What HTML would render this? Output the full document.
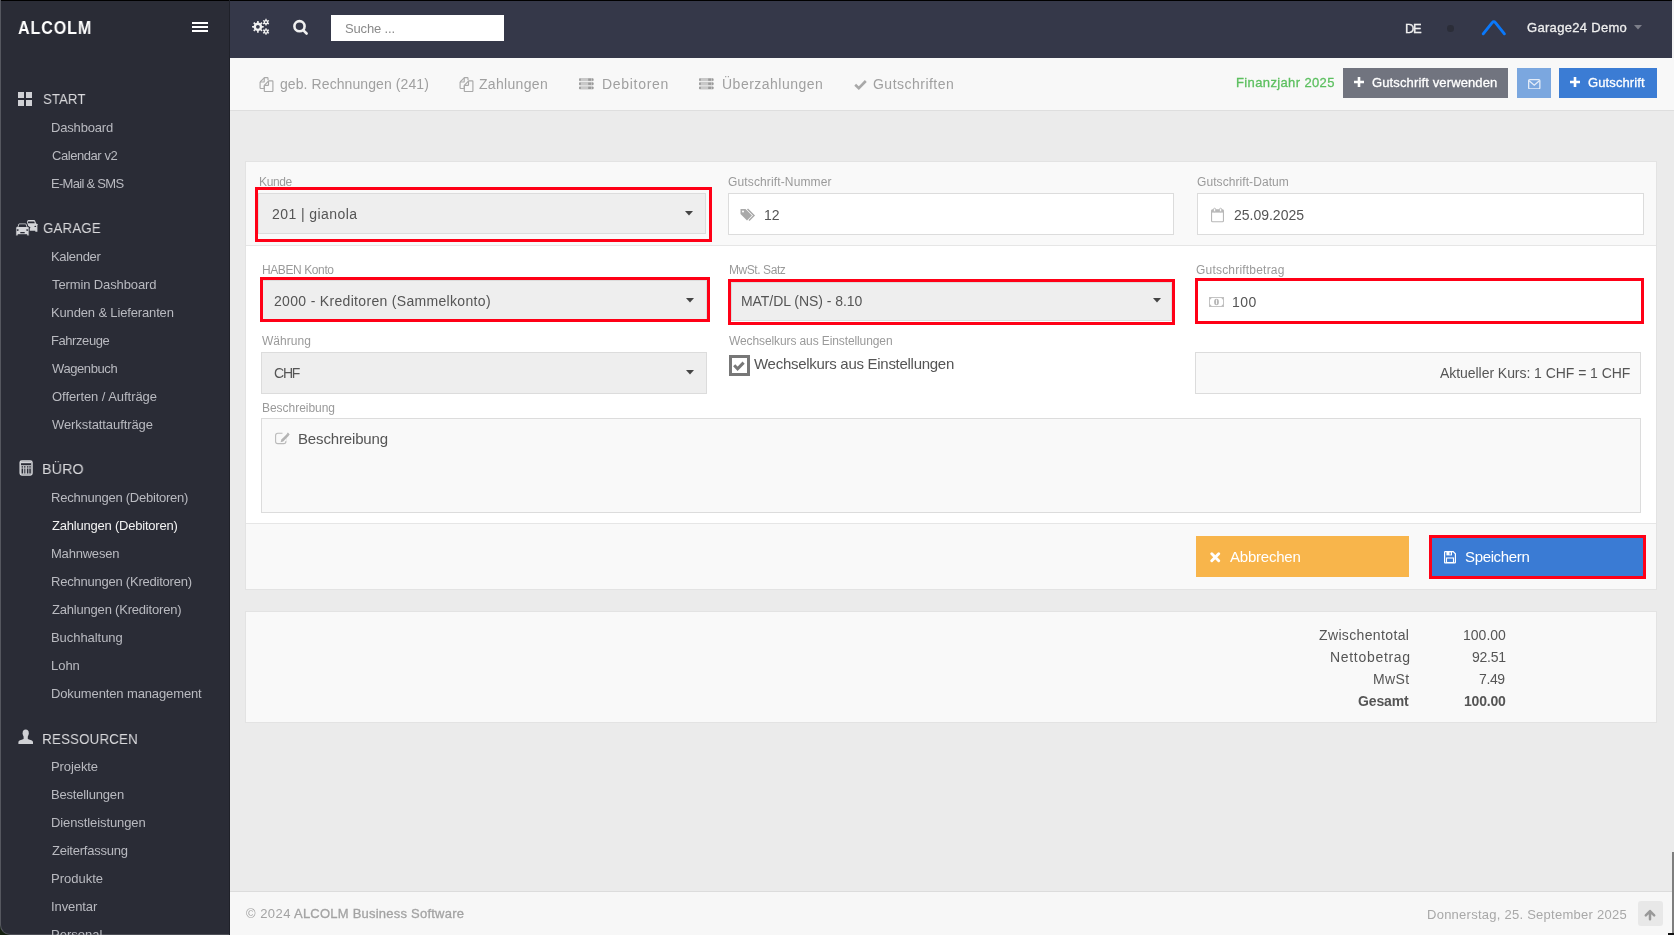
<!DOCTYPE html>
<html><head><meta charset="utf-8"><title>ALCOLM</title>
<style>
html,body{margin:0;padding:0;width:1674px;height:935px;overflow:hidden;background:#ebebeb;font-family:"Liberation Sans", sans-serif;}
.t{position:absolute;white-space:nowrap;will-change:transform;}
svg{display:block;}
</style></head><body>
<div style="position:absolute;left:0px;top:0px;width:230px;height:935px;background:#2a2c36"></div>
<div style="position:absolute;left:230px;top:0px;width:1444px;height:58px;background:#353849"></div>
<div style="position:absolute;left:230px;top:58px;width:1444px;height:52px;background:#f8f8f8"></div>
<div style="position:absolute;left:230px;top:110px;width:1444px;height:1px;background:#dedede"></div>
<div style="position:absolute;left:230px;top:111px;width:1444px;height:780px;background:#ebebeb"></div>
<div style="position:absolute;left:230px;top:891px;width:1444px;height:1px;background:#dcdcdc"></div>
<div style="position:absolute;left:230px;top:892px;width:1444px;height:43px;background:#f7f7f7"></div>
<div style="position:absolute;left:0px;top:0px;width:1674px;height:1px;background:#000"></div>
<div style="position:absolute;left:0px;top:0px;width:1px;height:935px;background:#55575f"></div>
<div style="position:absolute;left:1672px;top:0px;width:2px;height:58px;background:#f4f4f4"></div>
<div style="position:absolute;left:1672px;top:852px;width:2px;height:83px;background:#7e7e7e"></div>
<div style="position:absolute;left:1668px;top:933px;width:6px;height:2px;background:#111"></div>
<div style="position:absolute;left:229px;top:0px;width:1px;height:935px;background:#1f2129"></div>
<div style="position:absolute;left:0;top:905px;width:40px;height:30px;background:#14200f"></div>
<div style="position:absolute;left:0;top:880px;width:229px;height:55px;background:#2a2c36;box-sizing:border-box;border-left:1px solid #55575f;border-bottom:1.5px solid #4d4f57;border-bottom-left-radius:10px"></div>
<div style="position:absolute;left:192px;top:22px;width:16px;height:2px;background:#fff"></div>
<div style="position:absolute;left:192px;top:26px;width:16px;height:2px;background:#fff"></div>
<div style="position:absolute;left:192px;top:30px;width:16px;height:2px;background:#fff"></div>
<svg style="position:absolute;left:18px;top:92px" width="14" height="14" viewBox="0 0 14 14"><rect x="0" y="0" width="6" height="6" fill="#d0d1d5"/><rect x="8" y="0" width="6" height="6" fill="#d0d1d5"/><rect x="0" y="8" width="6" height="6" fill="#d0d1d5"/><rect x="8" y="8" width="6" height="6" fill="#d0d1d5"/></svg>
<svg style="position:absolute;left:12px;top:214px" width="30" height="26" viewBox="0 0 30 26"><g fill="#d4d5d9"><path d="M14.6 10 L15.3 7 Q15.6 6.1 16.5 6.1 H22 Q22.9 6.1 23.2 7 L24.1 9.5 L25.9 10.2 L25.4 11.3 V17.8 H23.3 V16.8 H17 V13 Z"/></g><path d="M15.6 9.3 L16.2 7.5 H22.2 L22.8 9.3 Z" fill="#2a2c36"/><ellipse cx="23.3" cy="12.4" rx="0.9" ry="0.7" fill="#2a2c36"/><path d="M3.1 13.4 L5 12.6 L6 9.8 Q6.4 8.9 7.3 8.9 H13.6 Q14.5 8.9 14.9 9.8 L15.9 12.6 L17.8 13.4 L17.2 14.6 V22 H14.8 V20.8 H6.1 V22 H3.7 V14.6 Z" fill="#d4d5d9" stroke="#2a2c36" stroke-width="1.1" stroke-linejoin="round"/><path d="M6.3 13.1 L7.3 10.3 H13.6 L14.6 13.1 Z" fill="#2a2c36"/><ellipse cx="5.7" cy="16.1" rx="1.1" ry="0.8" fill="#2a2c36"/><ellipse cx="15.2" cy="16.1" rx="1.1" ry="0.8" fill="#2a2c36"/><rect x="8.3" y="18" width="4.4" height="1.3" fill="#2a2c36"/></svg>
<svg style="position:absolute;left:19px;top:460px" width="14" height="16" viewBox="0 0 14 16"><rect x="1.2" y="0.9" width="11.8" height="14" rx="1.6" fill="none" stroke="#d4d5d9" stroke-width="1.5"/><rect x="2" y="1.6" width="10.2" height="1.6" fill="#d4d5d9"/><rect x="2" y="5.2" width="10.2" height="9" fill="#c9cace"/><g fill="#2a2c36"><rect x="2.6" y="6.2" width="1.5" height="1.4"/><rect x="5" y="6.2" width="1.5" height="1.4"/><rect x="7.9" y="6.2" width="1.5" height="1.4"/><rect x="10.3" y="6.2" width="1.5" height="1.4"/><rect x="2.6" y="8.5" width="1.5" height="5"/><rect x="5" y="8.5" width="1.5" height="5" fill="#55575f"/><rect x="7.9" y="8.5" width="1.5" height="5"/><rect x="10.3" y="8.5" width="1.5" height="5"/></g></svg>
<svg style="position:absolute;left:18px;top:729px" width="16" height="16" viewBox="0 0 16 16"><ellipse cx="7.7" cy="4.3" rx="3.1" ry="3.7" fill="#d0d1d5"/><path d="M5.6 6.5 H9.8 V9.9 C12.5 10.8 15 11.5 15 13 V15 H0.4 V13 C0.4 11.5 3 10.8 5.6 9.9 Z" fill="#d0d1d5"/></svg>
<svg style="position:absolute;left:248px;top:14px" width="26" height="24" viewBox="0 0 26 24"><path fill-rule="evenodd" fill="#f0f0f0" d="M9.07 8.58 L9.10 6.96 L10.70 6.96 L10.73 8.58 L12.30 9.23 L13.46 8.10 L14.60 9.24 L13.47 10.40 L14.12 11.97 L15.74 12.00 L15.74 13.60 L14.12 13.63 L13.47 15.20 L14.60 16.36 L13.46 17.50 L12.30 16.37 L10.73 17.02 L10.70 18.64 L9.10 18.64 L9.07 17.02 L7.50 16.37 L6.34 17.50 L5.20 16.36 L6.33 15.20 L5.68 13.63 L4.06 13.60 L4.06 12.00 L5.68 11.97 L6.33 10.40 L5.20 9.24 L6.34 8.10 L7.50 9.23 Z M11.80 12.80 A1.9 1.9 0 1 0 8.00 12.80 A1.9 1.9 0 1 0 11.80 12.80 Z"/><path fill-rule="evenodd" fill="#f0f0f0" d="M17.35 5.89 L17.33 4.87 L18.67 4.87 L18.65 5.89 L19.68 6.48 L20.55 5.95 L21.22 7.11 L20.33 7.61 L20.33 8.79 L21.22 9.29 L20.55 10.45 L19.68 9.92 L18.65 10.51 L18.67 11.53 L17.33 11.53 L17.35 10.51 L16.32 9.92 L15.45 10.45 L14.78 9.29 L15.67 8.79 L15.67 7.61 L14.78 7.11 L15.45 5.95 L16.32 6.48 Z M18.90 8.20 A0.9 0.9 0 1 0 17.10 8.20 A0.9 0.9 0 1 0 18.90 8.20 Z"/><path fill-rule="evenodd" fill="#f0f0f0" d="M17.35 15.19 L17.33 14.17 L18.67 14.17 L18.65 15.19 L19.68 15.78 L20.55 15.25 L21.22 16.41 L20.33 16.91 L20.33 18.09 L21.22 18.59 L20.55 19.75 L19.68 19.22 L18.65 19.81 L18.67 20.83 L17.33 20.83 L17.35 19.81 L16.32 19.22 L15.45 19.75 L14.78 18.59 L15.67 18.09 L15.67 16.91 L14.78 16.41 L15.45 15.25 L16.32 15.78 Z M18.90 17.50 A0.9 0.9 0 1 0 17.10 17.50 A0.9 0.9 0 1 0 18.90 17.50 Z"/></svg>
<svg style="position:absolute;left:286px;top:14px" width="28" height="26" viewBox="0 0 28 26"><circle cx="13.5" cy="12.2" r="5.1" fill="none" stroke="#f0f0f0" stroke-width="2.6"/><path d="M17.4 16.3 L20.6 19.5" stroke="#f0f0f0" stroke-width="2.6" stroke-linecap="round"/></svg>
<div style="position:absolute;left:331px;top:15px;width:173px;height:26px;background:#fff"></div>
<div style="position:absolute;left:1447px;top:25.3px;width:6.5px;height:6.5px;background:#2b2d38;border-radius:50%"></div>
<svg style="position:absolute;left:1480px;top:18px" width="28" height="19" viewBox="0 0 28 19"><path d="M3.2 15.8 L12.2 4.6 Q13.8 2.8 15.4 4.6 L24.4 15.8" fill="none" stroke="#0a78fa" stroke-width="2.9" stroke-linecap="round" stroke-linejoin="round"/></svg>
<svg style="position:absolute;left:1634px;top:25px" width="8" height="5" viewBox="0 0 8 5"><path d="M0 0 H8 L4 4.5 Z" fill="#7d7f8a"/></svg>
<svg style="position:absolute;left:258.3px;top:76px" width="16" height="16" viewBox="0 0 16 16"><g fill="none" stroke="#a9a9a9" stroke-width="1.15" stroke-linejoin="round"><path d="M2.1 6 L6.5 1.6 H9.3 Q10 1.6 10 2.3 V4.3"/><path d="M6.3 9.8 V12.5 H2.8 Q2.1 12.5 2.1 11.8 V6"/><path d="M2.1 6 H5.6 Q6.2 6 6.2 5.4 V1.8"/><path d="M6.3 9.3 L10.7 4.9 H14.2 Q14.9 4.9 14.9 5.6 V14.8 Q14.9 15.5 14.2 15.5 H7 Q6.3 15.5 6.3 14.8 Z"/><path d="M6.3 9.3 H9.9 Q10.5 9.3 10.5 8.7 V5.1"/></g></svg>
<svg style="position:absolute;left:457.7px;top:76px" width="16" height="16" viewBox="0 0 16 16"><g fill="none" stroke="#a9a9a9" stroke-width="1.15" stroke-linejoin="round"><path d="M2.1 6 L6.5 1.6 H9.3 Q10 1.6 10 2.3 V4.3"/><path d="M6.3 9.8 V12.5 H2.8 Q2.1 12.5 2.1 11.8 V6"/><path d="M2.1 6 H5.6 Q6.2 6 6.2 5.4 V1.8"/><path d="M6.3 9.3 L10.7 4.9 H14.2 Q14.9 4.9 14.9 5.6 V14.8 Q14.9 15.5 14.2 15.5 H7 Q6.3 15.5 6.3 14.8 Z"/><path d="M6.3 9.3 H9.9 Q10.5 9.3 10.5 8.7 V5.1"/></g></svg>
<svg style="position:absolute;left:579px;top:78.2px" width="15" height="12" viewBox="0 0 15 12"><g fill="#c8c8c8"><rect x="0" y="0" width="14.6" height="3.3" rx="1.2"/><rect x="0" y="4.1" width="14.6" height="3.3" rx="1.2"/><rect x="0" y="8.2" width="14.6" height="3.3" rx="1.2"/></g><g fill="#9a9a9a"><rect x="9.2" y="0.5" width="2.8" height="2.3"/><rect x="9.2" y="4.6" width="2.8" height="2.3"/><rect x="9.2" y="8.7" width="2.8" height="2.3"/><rect x="12.8" y="0.5" width="1.6" height="2.3" rx="0.6"/><rect x="12.8" y="4.6" width="1.6" height="2.3" rx="0.6"/><rect x="12.8" y="8.7" width="1.6" height="2.3" rx="0.6"/><rect x="0.2" y="0.5" width="1.6" height="2.3" rx="0.6"/><rect x="0.2" y="4.6" width="1.6" height="2.3" rx="0.6"/><rect x="0.2" y="8.7" width="1.6" height="2.3" rx="0.6"/></g></svg>
<svg style="position:absolute;left:699px;top:78.2px" width="15" height="12" viewBox="0 0 15 12"><g fill="#c8c8c8"><rect x="0" y="0" width="14.6" height="3.3" rx="1.2"/><rect x="0" y="4.1" width="14.6" height="3.3" rx="1.2"/><rect x="0" y="8.2" width="14.6" height="3.3" rx="1.2"/></g><g fill="#9a9a9a"><rect x="9.2" y="0.5" width="2.8" height="2.3"/><rect x="9.2" y="4.6" width="2.8" height="2.3"/><rect x="9.2" y="8.7" width="2.8" height="2.3"/><rect x="12.8" y="0.5" width="1.6" height="2.3" rx="0.6"/><rect x="12.8" y="4.6" width="1.6" height="2.3" rx="0.6"/><rect x="12.8" y="8.7" width="1.6" height="2.3" rx="0.6"/><rect x="0.2" y="0.5" width="1.6" height="2.3" rx="0.6"/><rect x="0.2" y="4.6" width="1.6" height="2.3" rx="0.6"/><rect x="0.2" y="8.7" width="1.6" height="2.3" rx="0.6"/></g></svg>
<svg style="position:absolute;left:854px;top:79px" width="13" height="11" viewBox="0 0 13 11"><path d="M1.2 5.8 L4.8 9.2 L11.8 2" fill="none" stroke="#a8a8a8" stroke-width="2.6"/></svg>
<div style="position:absolute;left:1343px;top:68px;width:165px;height:30px;background:#71747f"></div>
<svg style="position:absolute;left:1354px;top:77px" width="10" height="10" viewBox="0 0 10 10"><path d="M5 0 V10 M0 5 H10" stroke="#fff" stroke-width="2.6"/></svg>
<div style="position:absolute;left:1517px;top:68px;width:34px;height:30px;background:#7ba7df"></div>
<svg style="position:absolute;left:1527.5px;top:78.5px" width="13" height="10.5" viewBox="0 0 13 10.5"><rect x="0.65" y="0.65" width="11.2" height="9.2" rx="1.1" fill="none" stroke="#e4ecf8" stroke-width="1.3"/><path d="M1.1 1.8 L6.25 6.2 L11.4 1.8" fill="none" stroke="#e4ecf8" stroke-width="1.3"/></svg>
<div style="position:absolute;left:1559px;top:68px;width:98px;height:30px;background:#3b7cd4"></div>
<svg style="position:absolute;left:1570px;top:77px" width="10" height="10" viewBox="0 0 10 10"><path d="M5 0 V10 M0 5 H10" stroke="#fff" stroke-width="2.6"/></svg>
<div style="position:absolute;left:245px;top:161px;width:1412px;height:429px;background:#f9f9f9;box-sizing:border-box;border:1px solid #e3e3e3"></div>
<div style="position:absolute;left:246px;top:245px;width:1410px;height:1px;background:#e6e6e6"></div>
<div style="position:absolute;left:246px;top:246px;width:1410px;height:277px;background:#ffffff"></div>
<div style="position:absolute;left:246px;top:523px;width:1410px;height:1px;background:#e6e6e6"></div>
<div style="position:absolute;left:258px;top:192.5px;width:448px;height:41.5px;background:#eeeeee;box-sizing:border-box;border:1px solid #dcdcdc"></div>
<svg style="position:absolute;left:685px;top:211px" width="8" height="5" viewBox="0 0 8 5"><path d="M0 0 H8 L4 4.5 Z" fill="#444"/></svg>
<div style="position:absolute;left:255px;top:187px;width:457px;height:55px;box-sizing:border-box;border:3px solid #ff0016"></div>
<div style="position:absolute;left:727.5px;top:193px;width:446.5px;height:42px;background:#fff;box-sizing:border-box;border:1px solid #dcdcdc"></div>
<svg style="position:absolute;left:740px;top:208px" width="16" height="14" viewBox="0 0 16 14"><path d="M0.5 1.5 V6 L7 12.5 L12 7.5 L5.5 1 H1 Z" fill="#a9a9a9"/><path d="M7.5 1 L14 7.5 L9 12.5" fill="none" stroke="#a9a9a9" stroke-width="1.5"/><circle cx="3" cy="3.5" r="1" fill="#fff"/></svg>
<div style="position:absolute;left:1196.5px;top:193px;width:447px;height:42px;background:#fff;box-sizing:border-box;border:1px solid #dcdcdc"></div>
<svg style="position:absolute;left:1211px;top:207px" width="14" height="16" viewBox="0 0 14 16"><rect x="0.55" y="2.9" width="11.9" height="11.8" rx="1" fill="none" stroke="#b8b8b8" stroke-width="1.1"/><rect x="0.55" y="2.9" width="11.9" height="2.7" fill="#b8b8b8"/><rect x="2.6" y="1.2" width="2" height="3.6" rx="1" fill="#fff" stroke="#b8b8b8" stroke-width="0.9"/><rect x="8.6" y="1.2" width="2" height="3.6" rx="1" fill="#fff" stroke="#b8b8b8" stroke-width="0.9"/></svg>
<div style="position:absolute;left:262px;top:279.5px;width:445px;height:40px;background:#eeeeee;box-sizing:border-box;border:1px solid #dcdcdc"></div>
<svg style="position:absolute;left:686px;top:298px" width="8" height="5" viewBox="0 0 8 5"><path d="M0 0 H8 L4 4.5 Z" fill="#444"/></svg>
<div style="position:absolute;left:259.5px;top:276.5px;width:450.5px;height:45.7px;box-sizing:border-box;border:3px solid #ff0016"></div>
<div style="position:absolute;left:731px;top:282px;width:441px;height:39px;background:#eeeeee;box-sizing:border-box;border:1px solid #dcdcdc"></div>
<svg style="position:absolute;left:1153px;top:298px" width="8" height="5" viewBox="0 0 8 5"><path d="M0 0 H8 L4 4.5 Z" fill="#444"/></svg>
<div style="position:absolute;left:728px;top:279px;width:446.5px;height:46px;box-sizing:border-box;border:3px solid #ff0016"></div>
<div style="position:absolute;left:1197.5px;top:281px;width:443.5px;height:40px;background:#fff"></div>
<svg style="position:absolute;left:1209px;top:296.5px" width="15" height="10" viewBox="0 0 15 10"><rect x="0.5" y="0.5" width="14" height="9" fill="none" stroke="#c4c4c4" stroke-width="1"/><g fill="#bcbcbc"><path d="M0.5 0.5 H3.2 L0.5 3.2 Z"/><path d="M14.5 0.5 H11.8 L14.5 3.2 Z"/><path d="M0.5 9.5 H3.2 L0.5 6.8 Z"/><path d="M14.5 9.5 H11.8 L14.5 6.8 Z"/></g><ellipse cx="7.5" cy="5" rx="2.4" ry="3.2" fill="#b8b8b8"/><rect x="7.1" y="2.6" width="0.9" height="4.6" fill="#fff"/></svg>
<div style="position:absolute;left:1194.7px;top:278px;width:449px;height:46px;box-sizing:border-box;border:3px solid #ff0016"></div>
<div style="position:absolute;left:261px;top:352px;width:445.5px;height:41.5px;background:#eeeeee;box-sizing:border-box;border:1px solid #dcdcdc"></div>
<svg style="position:absolute;left:686px;top:370px" width="8" height="5" viewBox="0 0 8 5"><path d="M0 0 H8 L4 4.5 Z" fill="#444"/></svg>
<div style="position:absolute;left:729px;top:355px;width:20.5px;height:20.5px;box-sizing:border-box;border:3px solid #777;background:#fff"></div>
<svg style="position:absolute;left:729px;top:355px" width="21" height="21" viewBox="0 0 21 21"><path d="M5.2 10.2 L8.6 13.8 L14.6 7.6" fill="none" stroke="#777" stroke-width="3"/></svg>
<div style="position:absolute;left:1195px;top:351.5px;width:446px;height:42px;background:#f9f9f9;box-sizing:border-box;border:1px solid #dcdcdc"></div>
<div style="position:absolute;left:261px;top:417.5px;width:1380px;height:95px;background:#f9f9f9;box-sizing:border-box;border:1px solid #dcdcdc"></div>
<svg style="position:absolute;left:274px;top:432px" width="16" height="13" viewBox="0 0 16 13"><rect x="1.6" y="1.3" width="10.3" height="10.3" rx="2.2" fill="none" stroke="#bababa" stroke-width="1.1"/><rect x="8.5" y="0" width="4" height="4" fill="#f9f9f9"/><rect x="9.5" y="3" width="3" height="6" fill="#f9f9f9"/><path d="M6.6 10.2 L7.4 7.6 L13.2 1.8 L15 3.6 L9.2 9.4 Z" fill="#b3b3b3"/><path d="M12.9 1.6 L13.9 0.6 L15.7 2.4 L14.7 3.4 Z" fill="#b3b3b3"/></svg>
<div style="position:absolute;left:1196px;top:536px;width:213px;height:41px;background:#f8b54b"></div>
<svg style="position:absolute;left:1209.5px;top:552.3px" width="11" height="11" viewBox="0 0 11 11"><path d="M1.8 1.8 L8.7 8.7 M8.7 1.8 L1.8 8.7" stroke="#fff" stroke-width="2.9" stroke-linecap="round"/></svg>
<div style="position:absolute;left:1431px;top:537px;width:213px;height:40px;background:#3a7bd4"></div>
<svg style="position:absolute;left:1444px;top:551px" width="13" height="12.5" viewBox="0 0 13 12.5"><path d="M0.6 1.3 Q0.6 0.6 1.3 0.6 H9.2 L11.4 2.8 V11.2 Q11.4 11.9 10.7 11.9 H1.3 Q0.6 11.9 0.6 11.2 Z" fill="none" stroke="#fff" stroke-width="1.2"/><rect x="2.4" y="0.8" width="5.6" height="3.6" fill="#fff"/><rect x="5.5" y="1.4" width="1.3" height="2.2" fill="#3a7bd4"/><rect x="2.5" y="7" width="7" height="4.5" fill="none" stroke="#fff" stroke-width="1.1"/></svg>
<div style="position:absolute;left:1428.7px;top:534.7px;width:217.2px;height:44.3px;box-sizing:border-box;border:3px solid #ff0016"></div>
<div style="position:absolute;left:245px;top:611px;width:1412px;height:112px;background:#f9f9f9;box-sizing:border-box;border:1px solid #e3e3e3"></div>
<div style="position:absolute;left:1638px;top:901px;width:25px;height:24.5px;background:#e8e8e8;border-radius:3px"></div>
<svg style="position:absolute;left:1644px;top:907.5px" width="12" height="13" viewBox="0 0 12 13"><path d="M6 11.2 V3.2 M1.8 7.4 L6 3 L10.2 7.4" fill="none" stroke="#999" stroke-width="2.5" stroke-linecap="round" stroke-linejoin="round"/></svg>
<div class="t" style="left:18.30px;top:18.76px;font-size:18px;line-height:18px;font-weight:700;color:#ffffff;letter-spacing:1.000px;transform:scaleX(0.8935);transform-origin:0.00px 50%;">ALCOLM</div>
<div class="t" style="left:42.50px;top:91.48px;font-size:15.5px;line-height:15.5px;font-weight:400;color:#d9d9dc;letter-spacing:0.200px;transform:scaleX(0.8456);transform-origin:0.00px 50%;">START</div>
<div class="t" style="left:42.50px;top:220.48px;font-size:15.5px;line-height:15.5px;font-weight:400;color:#d9d9dc;letter-spacing:0.200px;transform:scaleX(0.8563);transform-origin:0.00px 50%;">GARAGE</div>
<div class="t" style="left:41.50px;top:460.88px;font-size:15.5px;line-height:15.5px;font-weight:400;color:#d9d9dc;letter-spacing:0.200px;transform:scaleX(0.9148);transform-origin:1.00px 50%;">BÜRO</div>
<div class="t" style="left:41.50px;top:730.88px;font-size:15.5px;line-height:15.5px;font-weight:400;color:#d9d9dc;letter-spacing:0.200px;transform:scaleX(0.8593);transform-origin:1.00px 50%;">RESSOURCEN</div>
<div class="t" style="left:50.50px;top:121.00px;font-size:13px;line-height:13px;font-weight:400;color:#b9bac0;letter-spacing:-0.171px;">Dashboard</div>
<div class="t" style="left:51.50px;top:148.95px;font-size:13px;line-height:13px;font-weight:400;color:#b9bac0;letter-spacing:-0.437px;">Calendar v2</div>
<div class="t" style="left:50.50px;top:176.90px;font-size:13px;line-height:13px;font-weight:400;color:#b9bac0;letter-spacing:-0.712px;">E-Mail &amp; SMS</div>
<div class="t" style="left:50.50px;top:250.20px;font-size:13px;line-height:13px;font-weight:400;color:#b9bac0;letter-spacing:-0.316px;">Kalender</div>
<div class="t" style="left:51.50px;top:278.15px;font-size:13px;line-height:13px;font-weight:400;color:#b9bac0;letter-spacing:-0.119px;">Termin Dashboard</div>
<div class="t" style="left:50.50px;top:306.10px;font-size:13px;line-height:13px;font-weight:400;color:#b9bac0;letter-spacing:-0.149px;">Kunden &amp; Lieferanten</div>
<div class="t" style="left:50.50px;top:334.05px;font-size:13px;line-height:13px;font-weight:400;color:#b9bac0;letter-spacing:-0.427px;">Fahrzeuge</div>
<div class="t" style="left:51.50px;top:362.00px;font-size:13px;line-height:13px;font-weight:400;color:#b9bac0;letter-spacing:-0.408px;">Wagenbuch</div>
<div class="t" style="left:51.50px;top:389.95px;font-size:13px;line-height:13px;font-weight:400;color:#b9bac0;letter-spacing:-0.054px;">Offerten / Aufträge</div>
<div class="t" style="left:51.50px;top:417.90px;font-size:13px;line-height:13px;font-weight:400;color:#b9bac0;letter-spacing:-0.090px;">Werkstattaufträge</div>
<div class="t" style="left:50.50px;top:491.30px;font-size:13px;line-height:13px;font-weight:400;color:#b9bac0;letter-spacing:-0.235px;">Rechnungen (Debitoren)</div>
<div class="t" style="left:51.50px;top:519.25px;font-size:13px;line-height:13px;font-weight:400;color:#f2f2f2;letter-spacing:-0.212px;">Zahlungen (Debitoren)</div>
<div class="t" style="left:50.50px;top:547.20px;font-size:13px;line-height:13px;font-weight:400;color:#b9bac0;letter-spacing:-0.208px;">Mahnwesen</div>
<div class="t" style="left:50.50px;top:575.15px;font-size:13px;line-height:13px;font-weight:400;color:#b9bac0;letter-spacing:-0.225px;">Rechnungen (Kreditoren)</div>
<div class="t" style="left:51.50px;top:603.10px;font-size:13px;line-height:13px;font-weight:400;color:#b9bac0;letter-spacing:-0.198px;">Zahlungen (Kreditoren)</div>
<div class="t" style="left:50.50px;top:631.05px;font-size:13px;line-height:13px;font-weight:400;color:#b9bac0;letter-spacing:-0.055px;">Buchhaltung</div>
<div class="t" style="left:50.50px;top:659.00px;font-size:13px;line-height:13px;font-weight:400;color:#b9bac0;letter-spacing:-0.030px;">Lohn</div>
<div class="t" style="left:50.50px;top:686.95px;font-size:13px;line-height:13px;font-weight:400;color:#b9bac0;letter-spacing:-0.124px;">Dokumenten management</div>
<div class="t" style="left:50.50px;top:759.90px;font-size:13px;line-height:13px;font-weight:400;color:#b9bac0;letter-spacing:-0.094px;">Projekte</div>
<div class="t" style="left:50.50px;top:787.85px;font-size:13px;line-height:13px;font-weight:400;color:#b9bac0;letter-spacing:-0.185px;">Bestellungen</div>
<div class="t" style="left:50.50px;top:815.80px;font-size:13px;line-height:13px;font-weight:400;color:#b9bac0;letter-spacing:-0.092px;">Dienstleistungen</div>
<div class="t" style="left:51.50px;top:843.75px;font-size:13px;line-height:13px;font-weight:400;color:#b9bac0;letter-spacing:-0.236px;">Zeiterfassung</div>
<div class="t" style="left:50.50px;top:871.70px;font-size:13px;line-height:13px;font-weight:400;color:#b9bac0;letter-spacing:-0.000px;">Produkte</div>
<div class="t" style="left:50.50px;top:899.65px;font-size:13px;line-height:13px;font-weight:400;color:#b9bac0;letter-spacing:-0.092px;">Inventar</div>
<div class="t" style="left:50.50px;top:927.60px;font-size:13px;line-height:13px;font-weight:400;color:#b9bac0;letter-spacing:0.000px;">Personal</div>
<div class="t" style="left:344.50px;top:22.00px;font-size:13px;line-height:13px;font-weight:400;color:#8a8a8a;letter-spacing:-0.150px;">Suche ...</div>
<div class="t" style="left:1404.60px;top:21.70px;font-size:13px;line-height:13px;font-weight:400;color:#f0f0f0;letter-spacing:-1.488px;-webkit-text-stroke:0.3px #f0f0f0;">DE</div>
<div class="t" style="left:1527.40px;top:20.60px;font-size:13px;line-height:13px;font-weight:400;color:#eeeeee;letter-spacing:0.310px;-webkit-text-stroke:0.3px #eeeeee;">Garage24 Demo</div>
<div class="t" style="left:279.60px;top:77.15px;font-size:14px;line-height:14px;font-weight:400;color:#a0a0a0;letter-spacing:0.088px;">geb. Rechnungen (241)</div>
<div class="t" style="left:479.30px;top:77.15px;font-size:14px;line-height:14px;font-weight:400;color:#a0a0a0;letter-spacing:0.315px;">Zahlungen</div>
<div class="t" style="left:601.50px;top:77.15px;font-size:14px;line-height:14px;font-weight:400;color:#a0a0a0;letter-spacing:0.698px;">Debitoren</div>
<div class="t" style="left:721.50px;top:77.15px;font-size:14px;line-height:14px;font-weight:400;color:#a0a0a0;letter-spacing:0.494px;">Überzahlungen</div>
<div class="t" style="left:873.00px;top:77.15px;font-size:14px;line-height:14px;font-weight:400;color:#a0a0a0;letter-spacing:0.483px;">Gutschriften</div>
<div class="t" style="left:1235.60px;top:75.50px;font-size:13px;line-height:13px;font-weight:400;color:#5cbf5f;letter-spacing:0.372px;-webkit-text-stroke:0.3px #5cbf5f;">Finanzjahr 2025</div>
<div class="t" style="left:1371.90px;top:76.30px;font-size:13px;line-height:13px;font-weight:400;color:#ffffff;letter-spacing:0.131px;-webkit-text-stroke:0.3px #ffffff;">Gutschrift verwenden</div>
<div class="t" style="left:1588.20px;top:76.30px;font-size:13px;line-height:13px;font-weight:400;color:#ffffff;letter-spacing:0.110px;-webkit-text-stroke:0.3px #ffffff;">Gutschrift</div>
<div class="t" style="left:258.60px;top:176.14px;font-size:12px;line-height:12px;font-weight:400;color:#9a9a9a;letter-spacing:-0.356px;">Kunde</div>
<div class="t" style="left:271.50px;top:206.95px;font-size:14px;line-height:14px;font-weight:400;color:#555555;letter-spacing:0.422px;">201 | gianola</div>
<div class="t" style="left:727.80px;top:176.14px;font-size:12px;line-height:12px;font-weight:400;color:#9a9a9a;letter-spacing:0.135px;">Gutschrift-Nummer</div>
<div class="t" style="left:764.00px;top:208.35px;font-size:14px;line-height:14px;font-weight:400;color:#555555;letter-spacing:-0.086px;">12</div>
<div class="t" style="left:1196.80px;top:175.94px;font-size:12px;line-height:12px;font-weight:400;color:#9a9a9a;letter-spacing:0.074px;">Gutschrift-Datum</div>
<div class="t" style="left:1233.70px;top:208.35px;font-size:14px;line-height:14px;font-weight:400;color:#555555;letter-spacing:-0.009px;">25.09.2025</div>
<div class="t" style="left:261.50px;top:263.84px;font-size:12px;line-height:12px;font-weight:400;color:#9a9a9a;letter-spacing:-0.406px;">HABEN Konto</div>
<div class="t" style="left:274.40px;top:294.45px;font-size:14px;line-height:14px;font-weight:400;color:#555555;letter-spacing:0.319px;">2000 - Kreditoren (Sammelkonto)</div>
<div class="t" style="left:728.60px;top:263.84px;font-size:12px;line-height:12px;font-weight:400;color:#9a9a9a;letter-spacing:-0.431px;">MwSt. Satz</div>
<div class="t" style="left:740.50px;top:294.45px;font-size:14px;line-height:14px;font-weight:400;color:#555555;letter-spacing:-0.051px;">MAT/DL (NS) - 8.10</div>
<div class="t" style="left:1195.60px;top:264.44px;font-size:12px;line-height:12px;font-weight:400;color:#9a9a9a;letter-spacing:0.200px;">Gutschriftbetrag</div>
<div class="t" style="left:1231.50px;top:295.15px;font-size:14px;line-height:14px;font-weight:400;color:#555555;letter-spacing:0.514px;">100</div>
<div class="t" style="left:261.50px;top:335.04px;font-size:12px;line-height:12px;font-weight:400;color:#9a9a9a;letter-spacing:0.030px;">Währung</div>
<div class="t" style="left:274.40px;top:365.55px;font-size:14px;line-height:14px;font-weight:400;color:#555555;letter-spacing:-1.210px;">CHF</div>
<div class="t" style="left:728.60px;top:335.34px;font-size:12px;line-height:12px;font-weight:400;color:#9a9a9a;letter-spacing:-0.106px;">Wechselkurs aus Einstellungen</div>
<div class="t" style="left:754.40px;top:356.10px;font-size:15px;line-height:15px;font-weight:400;color:#555555;letter-spacing:-0.283px;">Wechselkurs aus Einstellungen</div>
<div class="t" style="left:1439.70px;top:366.45px;font-size:14px;line-height:14px;font-weight:400;color:#555555;letter-spacing:-0.051px;">Aktueller Kurs: 1 CHF = 1 CHF</div>
<div class="t" style="left:261.50px;top:401.54px;font-size:12px;line-height:12px;font-weight:400;color:#9a9a9a;letter-spacing:-0.037px;">Beschreibung</div>
<div class="t" style="left:298.00px;top:431.10px;font-size:15px;line-height:15px;font-weight:400;color:#555555;letter-spacing:-0.153px;">Beschreibung</div>
<div class="t" style="left:1229.60px;top:548.90px;font-size:15px;line-height:15px;font-weight:400;color:#ffffff;letter-spacing:-0.214px;">Abbrechen</div>
<div class="t" style="left:1465.30px;top:548.80px;font-size:15px;line-height:15px;font-weight:400;color:#ffffff;letter-spacing:-0.350px;">Speichern</div>
<div class="t" style="left:1319.00px;top:627.85px;font-size:14px;line-height:14px;font-weight:400;color:#555555;letter-spacing:0.360px;">Zwischentotal</div>
<div class="t" style="left:1462.60px;top:627.85px;font-size:14px;line-height:14px;font-weight:400;color:#555555;letter-spacing:0.013px;">100.00</div>
<div class="t" style="left:1329.50px;top:649.75px;font-size:14px;line-height:14px;font-weight:400;color:#555555;letter-spacing:0.693px;">Nettobetrag</div>
<div class="t" style="left:1471.50px;top:649.75px;font-size:14px;line-height:14px;font-weight:400;color:#555555;letter-spacing:-0.262px;">92.51</div>
<div class="t" style="left:1372.60px;top:671.55px;font-size:14px;line-height:14px;font-weight:400;color:#555555;letter-spacing:0.363px;">MwSt</div>
<div class="t" style="left:1479.40px;top:671.55px;font-size:14px;line-height:14px;font-weight:400;color:#555555;letter-spacing:-0.387px;">7.49</div>
<div class="t" style="left:1357.80px;top:693.55px;font-size:14px;line-height:14px;font-weight:700;color:#555555;letter-spacing:-0.139px;">Gesamt</div>
<div class="t" style="left:1463.60px;top:693.55px;font-size:14px;line-height:14px;font-weight:700;color:#555555;letter-spacing:-0.187px;">100.00</div>
<div class="t" style="left:245.70px;top:907.20px;font-size:13px;line-height:13px;font-weight:400;color:#a3a3a3;letter-spacing:0.484px;">© 2024</div>
<div class="t" style="left:293.50px;top:907.20px;font-size:13px;line-height:13px;font-weight:400;color:#a3a3a3;letter-spacing:0.226px;-webkit-text-stroke:0.3px #a3a3a3;">ALCOLM Business Software</div>
<div class="t" style="left:1427.00px;top:907.50px;font-size:13px;line-height:13px;font-weight:400;color:#a8a8a8;letter-spacing:0.255px;">Donnerstag, 25. September 2025</div>
</body></html>
